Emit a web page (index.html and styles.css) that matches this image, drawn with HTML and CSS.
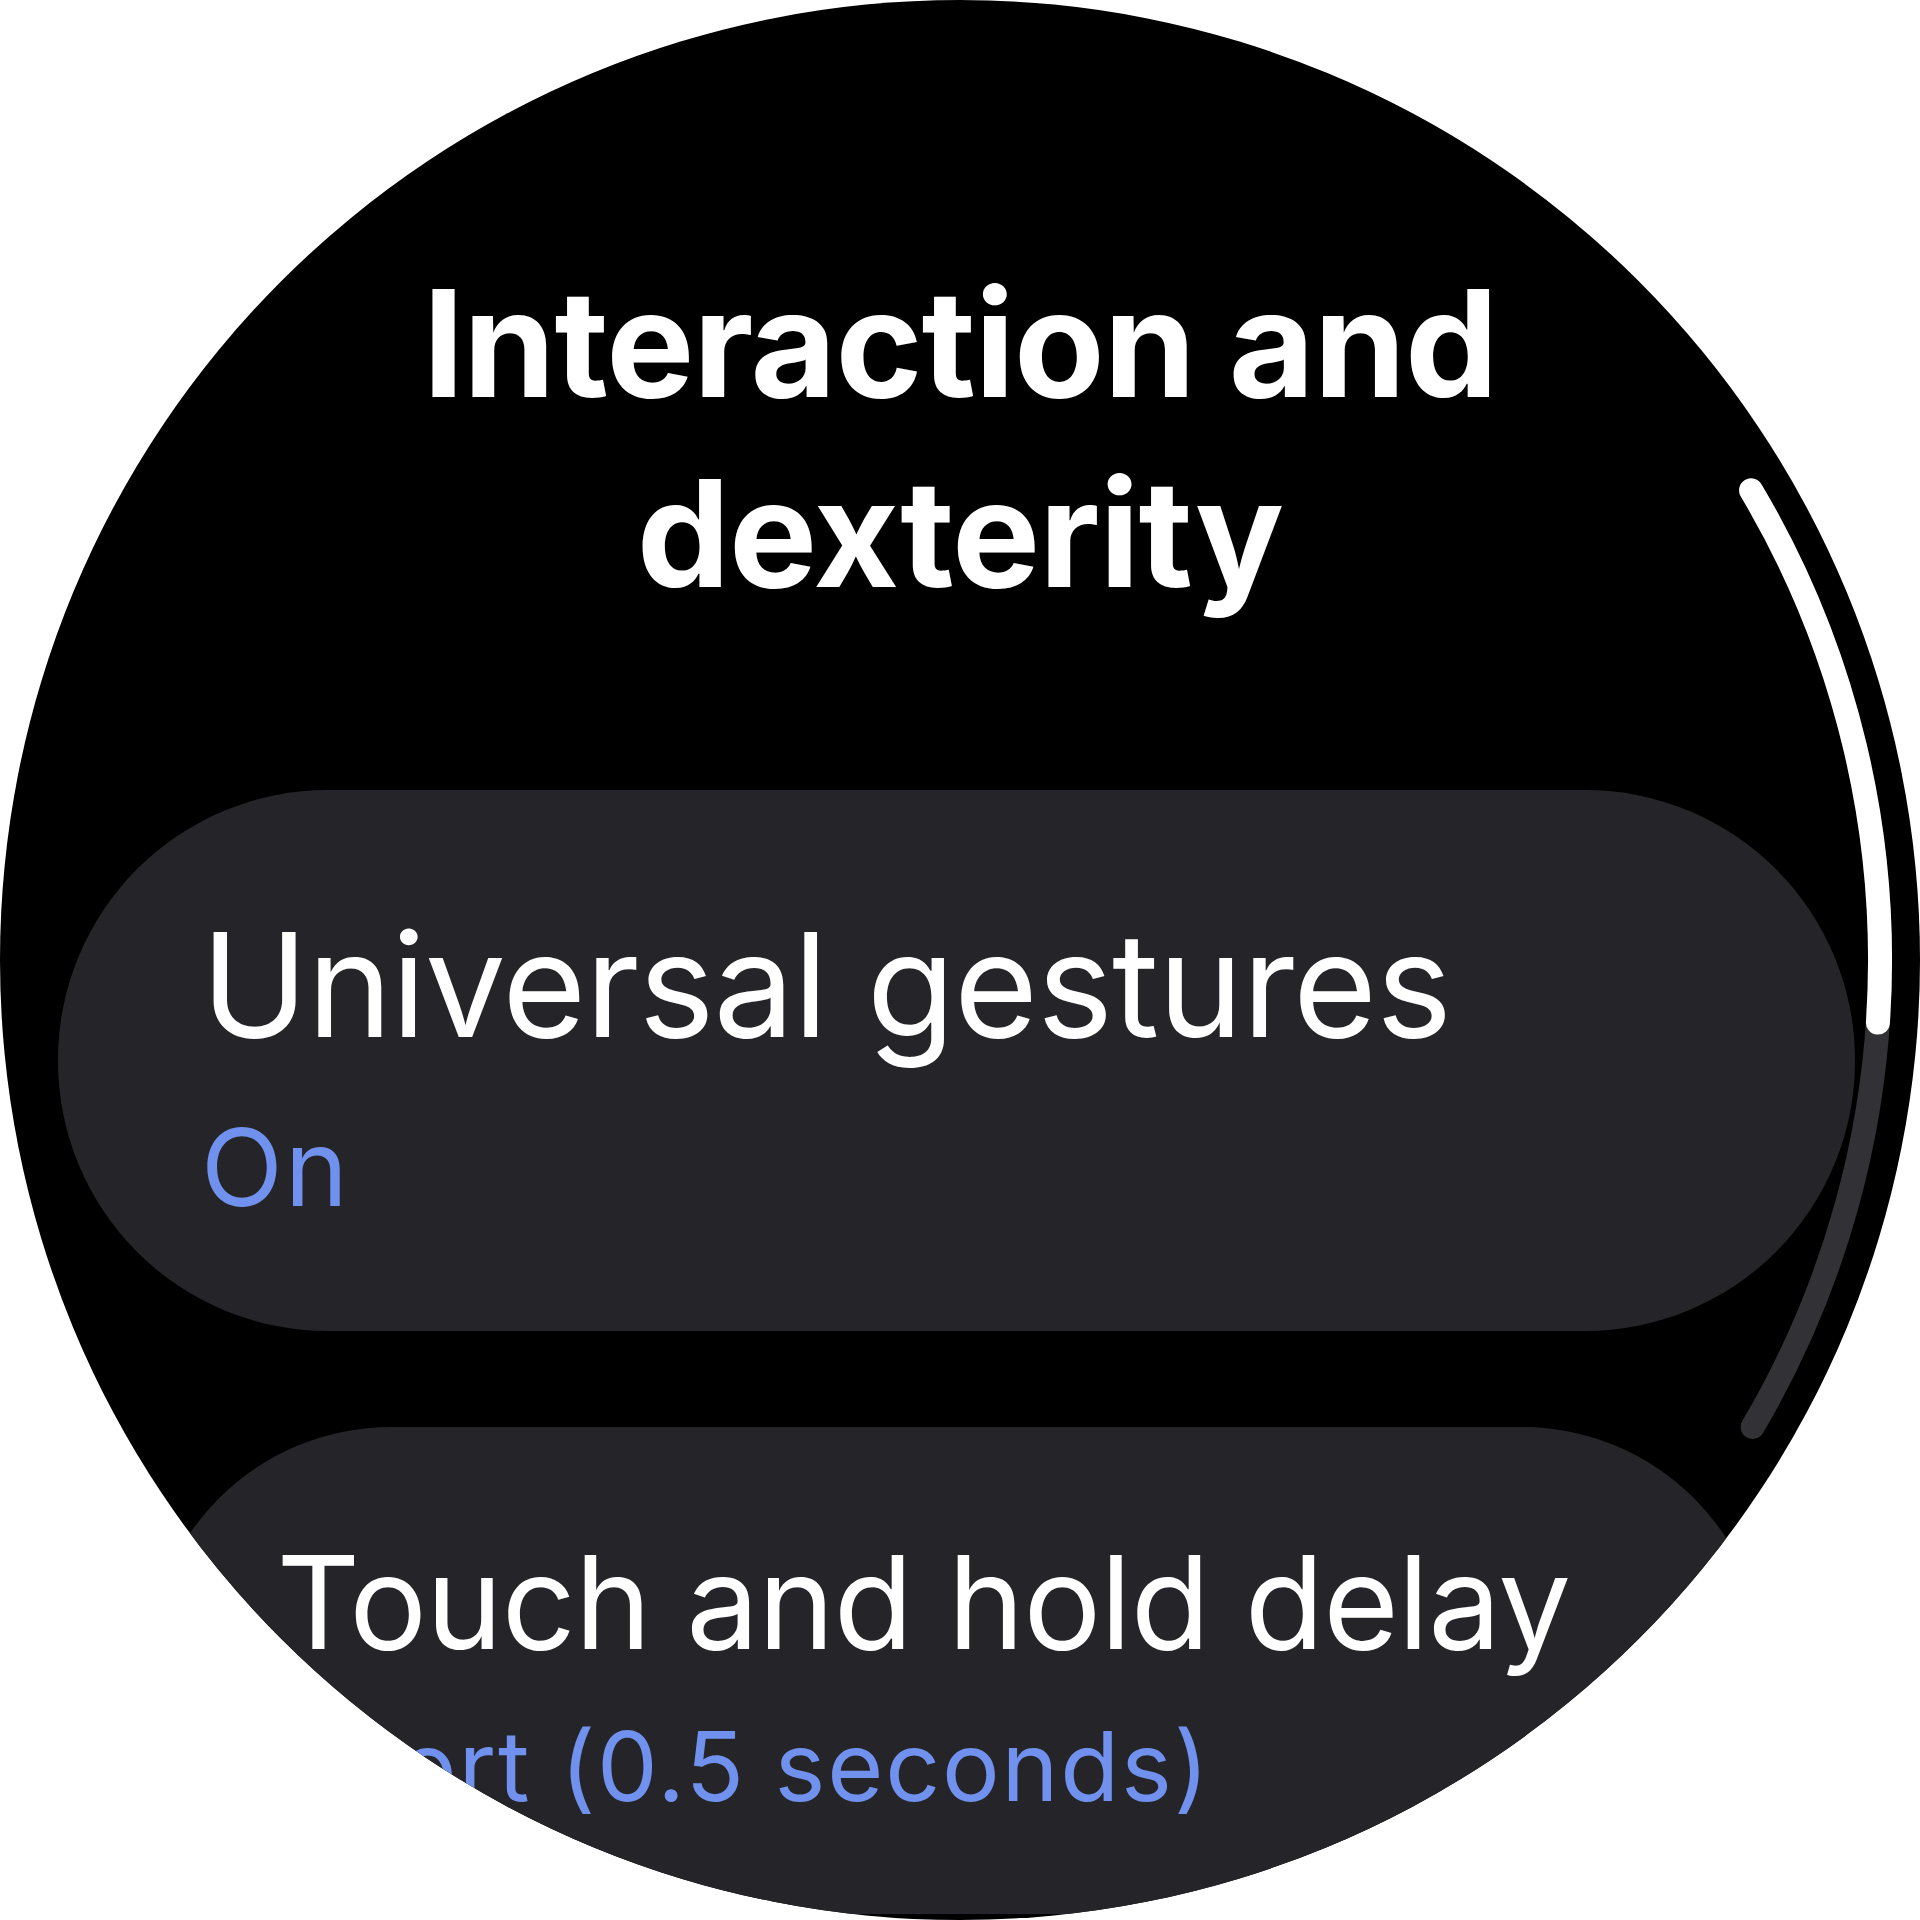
FILE: index.html
```html
<!DOCTYPE html>
<html lang="en">
<head>
<meta charset="utf-8">
<title>Interaction and dexterity</title>
<link rel="stylesheet" href="styles.css">
</head>
<body>
<div class="watch">
  <h1 class="title">Interaction and<br>dexterity</h1>
  <div class="list">
    <div class="chip">
      <div class="chip-label">Universal gestures</div>
      <div class="chip-sub">On</div>
    </div>
    <div class="chip chip-scaled">
      <div class="chip-label">Touch and hold delay</div>
      <div class="chip-sub">Short (0.5 seconds)</div>
    </div>
  </div>
  <svg class="scrollbar" width="1920" height="1920" viewBox="0 0 1920 1920">
    <path class="track" d="M1751.1 490.3 A920 920 0 0 1 1752.7 1426.9"/>
    <path class="thumb" d="M1751.1 490.3 A920 920 0 0 1 1877.9 1022.6"/>
  </svg>
</div>
</body>
</html>
```

FILE: styles.css
```css
html, body {
  margin: 0;
  padding: 0;
  background: #ffffff;
}

.watch {
  position: relative;
  width: 1920px;
  height: 1920px;
  border-radius: 50%;
  background: #000000;
  overflow: hidden;
  font-family: Inter, Lato, sans-serif;
  color: #ffffff;
}

.title {
  margin: 0;
  padding-top: 249px;
  font-size: 148px;
  line-height: 190px;
  font-weight: 700;
  text-align: center;
  letter-spacing: -1px;
}

.list {
  display: flex;
  flex-direction: column;
  gap: 96px;
  margin-top: 161px;
  padding-left: 58px;
}

.chip {
  box-sizing: border-box;
  width: 1797px;
  height: 541px;
  border-radius: 270px;
  background: #252529;
  padding: 109px 0 0 143px;
  display: flex;
  flex-direction: column;
  gap: 31px;
  flex-shrink: 0;
}

.chip-scaled {
  transform: scale(0.9);
  transform-origin: top center;
}

.chip-label {
  font-size: 144px;
  line-height: 1.2;
  font-weight: 400;
  letter-spacing: -1px;
  white-space: nowrap;
}

.chip-sub {
  font-size: 107px;
  line-height: 1.2;
  font-weight: 400;
  letter-spacing: 2px;
  color: #7092ee;
  white-space: nowrap;
}

.scrollbar {
  position: absolute;
  left: 0;
  top: 0;
  pointer-events: none;
}

.scrollbar path {
  fill: none;
  stroke-width: 24;
  stroke-linecap: round;
}

.track {
  stroke: #313136;
}

.thumb {
  stroke: #ffffff;
}
```
